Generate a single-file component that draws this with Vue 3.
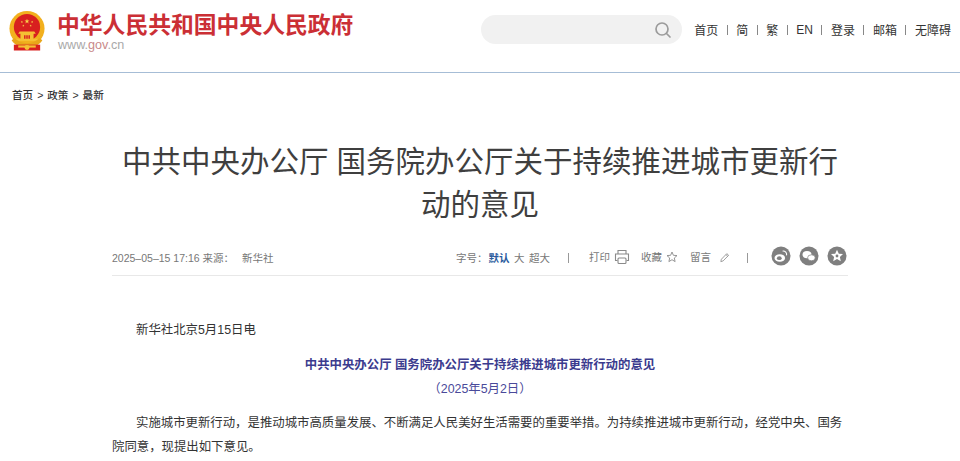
<script setup>
const nav = ['首页', '简', '繁', 'EN', '登录', '邮箱', '无障碍']
const stars = [[26, 14, 3.6], [19, 15, 1.6], [21, 20, 1.6], [31, 20, 1.6], [33, 15, 1.6]]
function starPoints(cx, cy, r) {
  const pts = []
  for (let i = 0; i < 10; i++) {
    const a = -Math.PI / 2 + (i * Math.PI) / 5
    const rr = i % 2 ? r * 0.42 : r
    pts.push(`${(cx + rr * Math.cos(a)).toFixed(2)},${(cy + rr * Math.sin(a)).toFixed(2)}`)
  }
  return pts.join(' ')
}
</script>

<template>
  <div class="page">
    <header class="top">
      <div class="brand">
        <svg class="emblem" viewBox="0 0 52 56" width="38" height="41">
          <circle cx="26" cy="24" r="24" fill="#f2b01e" />
          <circle cx="26" cy="22" r="18" fill="#d8201f" />
          <polygon v-for="(s, i) in stars" :key="i" :points="starPoints(s[0], s[1], s[2])" fill="#f8d24a" />
          <path d="M14 31h24l-2-3H16zM17 31h18v7H17zM11 38h30v3H11z" fill="#f5c033" />
          <path d="M22 33h2v5h-2zM28 33h2v5h-2zM25 33h2v5h-2z" fill="#d8201f" />
          <path d="M5 40c4 7 12 10 21 10s17-3 21-10l-4-3c-4 4-10 7-17 7S13 41 9 37z" fill="#e8a61a" />
          <path d="M8 46h36v8H8z" fill="#d8201f" />
          <path d="M14 47h24v3H14z" fill="#f5c033" />
          <circle cx="26" cy="50" r="3.4" fill="#f5c033" />
        </svg>
        <div class="brand-text">
          <div class="site-name">中华人民共和国中央人民政府</div>
          <div class="site-url">www.<span class="url-accent">gov</span>.cn</div>
        </div>
      </div>
      <div class="top-right">
        <div class="search">
          <svg viewBox="0 0 18 18" width="18" height="18" fill="none" stroke="#9b9b9b" stroke-width="1.7">
            <circle cx="8" cy="8" r="6" />
            <path d="M12.5 12.5L16 16" stroke-linecap="round" />
          </svg>
        </div>
        <nav class="nav">
          <template v-for="(n, i) in nav" :key="n">
            <i v-if="i" class="sep"></i>
            <span>{{ n }}</span>
          </template>
        </nav>
      </div>
    </header>

    <div class="crumbs">首页 <em>&gt;</em> 政策 <em>&gt;</em> 最新</div>

    <main class="article">
      <h1>中共中央办公厅 国务院办公厅关于持续推进城市更新行动的意见</h1>

      <div class="meta">
        <div class="meta-left">
          <span>2025–05–15 17:16</span>
          <span class="source">来源：</span>
          <span>新华社</span>
        </div>
        <div class="meta-right">
          <span class="size">字号：<b>默认</b><span>大</span><span>超大</span></span>
          <i class="bar b1"></i>
          <span class="tool">打印
            <svg viewBox="0 0 16 16" width="16" height="16" fill="none" stroke="#8a8a8a" stroke-width="1.1">
              <path d="M4 5V1.5h8V5M3.5 11.5H1.5V5h13v6.500h-2" />
              <rect x="4" y="9" width="8" height="5.500" rx="1" />
            </svg>
          </span>
          <span class="tool t2">收藏
            <svg viewBox="0 0 12 12" width="12" height="12" fill="none" stroke="#8a8a8a" stroke-width=".9">
              <polygon points="6,1 7.400,4.300 11,4.600 8.300,7 9.100,10.600 6,8.700 2.900,10.600 3.700,7 1,4.600 4.600,4.300" />
            </svg>
          </span>
          <span class="tool t3">留言
            <svg viewBox="0 0 12 12" width="11" height="11" fill="none" stroke="#8a8a8a" stroke-width=".9">
              <path d="M2 10.500l.6-2.600L8.500 1.800l2 1.800-6 6.100zM7.500 2.800l2 1.800" />
            </svg>
          </span>
          <i class="bar b2"></i>
          <div class="share">
            <svg viewBox="0 0 20 20" width="20" height="20">
              <circle cx="10" cy="10" r="9.500" fill="#7f7f7f" />
              <ellipse cx="8.800" cy="12" rx="5.300" ry="3.800" fill="#fff" />
              <ellipse cx="8.300" cy="12.200" rx="2.400" ry="1.900" fill="#7f7f7f" />
              <path d="M12 5a3.500 3.500 0 0 1 3.600 4" fill="none" stroke="#fff" stroke-width="1.100" stroke-linecap="round" />
            </svg>
            <svg viewBox="0 0 20 20" width="20" height="20">
              <circle cx="10" cy="10" r="9.500" fill="#7f7f7f" />
              <ellipse cx="8" cy="8.600" rx="4.500" ry="3.700" fill="#fff" />
              <ellipse cx="12.400" cy="11.800" rx="3.800" ry="3" fill="#fff" stroke="#7f7f7f" stroke-width=".7" />
            </svg>
            <svg viewBox="0 0 20 20" width="20" height="20">
              <circle cx="10" cy="10" r="9.500" fill="#7f7f7f" />
              <polygon points="10,3.800 11.800,7.700 16,8.100 12.900,11 13.800,15.200 10,13 6.200,15.200 7.100,11 4,8.100 8.200,7.700" fill="#fff" />
              <circle cx="10" cy="10" r="1.400" fill="#7f7f7f" />
            </svg>
          </div>
        </div>
      </div>

      <div class="body">
        <p class="lead">新华社北京5月15日电</p>
        <p class="center strong">中共中央办公厅 国务院办公厅关于持续推进城市更新行动的意见</p>
        <p class="center date">（2025年5月2日）</p>
        <p class="para">实施城市更新行动，是推动城市高质量发展、不断满足人民美好生活需要的重要举措。为持续推进城市更新行动，经党中央、国务院同意，现提出如下意见。</p>
      </div>
    </main>
  </div>
</template>

<style>
html, body { margin: 0; background: #fff; overflow: hidden; }
</style>

<style scoped>
.page {
  width: 960px;
  height: 461px;
  overflow: hidden;
  background: #fff;
  color: #333;
  font-family: "Liberation Sans", "Noto Sans CJK SC", sans-serif;
}
.top {
  height: 73px;
  box-sizing: border-box;
  border-bottom: 1px solid #a6bdd6;
  display: flex;
  justify-content: space-between;
  padding: 11px 9px 0 8px;
}
.brand { display: flex; gap: 11px; align-items: flex-start; }
.emblem { flex: none; }
.site-name {
  font-size: 22.800px;
  line-height: 28px;
  font-weight: 700;
  color: #cb2f35;
  white-space: nowrap;
}
.site-url {
  margin-top: -1px;
  margin-left: 1px;
  font-size: 12.600px;
  line-height: 14px;
  color: #a9a9a9;
}
.url-accent { color: #c98a8a; }
.top-right { display: flex; align-items: flex-start; gap: 12px; padding-top: 4px; }
.search {
  width: 201px;
  height: 29px;
  box-sizing: border-box;
  border-radius: 15px;
  background: #f1f1f1;
  display: flex;
  align-items: center;
  justify-content: flex-end;
  padding-right: 10px;
}
.nav {
  display: flex;
  align-items: center;
  height: 29px;
  font-size: 12px;
  color: #333;
  white-space: nowrap;
}
.sep {
  width: 1px;
  height: 10px;
  margin: 0 8.500px;
  background: #888;
}
.crumbs {
  margin: 15px 0 0 12px;
  height: 15px;
  font-size: 10.600px;
  line-height: 15px;
  font-weight: 500;
  color: #333;
}
.crumbs em { font-style: normal; font-weight: 400; margin: 0 1px; }
.article { width: 736px; margin: 0 auto; }
h1 {
  margin: 37px 0 0;
  text-align: center;
  font-size: 29.500px;
  line-height: 43px;
  font-weight: 400;
  color: #3f3f3f;
}
.meta {
  margin-top: 19px;
  height: 31px;
  box-sizing: border-box;
  border-bottom: 1px solid #e8e8e8;
  display: flex;
  justify-content: space-between;
  align-items: flex-start;
  font-size: 10.500px;
  line-height: 20px;
  color: #777;
}
.meta-left { display: flex; align-items: center; height: 20px; padding-top: 3px; }
.source { margin: 0 8px 0 3px; }
.meta-right { display: flex; align-items: center; height: 20px; padding-top: 1px; }
.size { display: flex; align-items: center; padding-top: 3px; }
.size b { color: #2a5a9c; font-weight: 700; margin-left: 1px; }
.size span { margin-left: 4.500px; }
.bar { width: 1px; height: 10px; background: #999; margin-top: 3px; }
.b1 { margin-left: 18px; margin-right: 20px; }
.b2 { margin-left: 17px; margin-right: 23px; }
.tool { display: flex; align-items: center; gap: 4px; padding-top: 2px; }
.t2 { margin-left: 11px; }
.t3 { margin-left: 12px; gap: 8px; }
.share { display: flex; gap: 8px; margin-right: 1px; }
.body { margin-top: 42px; font-size: 12.400px; line-height: 24px; color: #333; }
.body p { margin: 0; }
.lead { text-indent: 24px; }
.center { text-align: center; }
.strong { margin-top: 11px !important; color: #3b3b8e; font-weight: 700; }
.date { color: #4a4a9a; font-weight: 400; }
.para { margin-top: 10px !important; text-indent: 24px; }
</style>
